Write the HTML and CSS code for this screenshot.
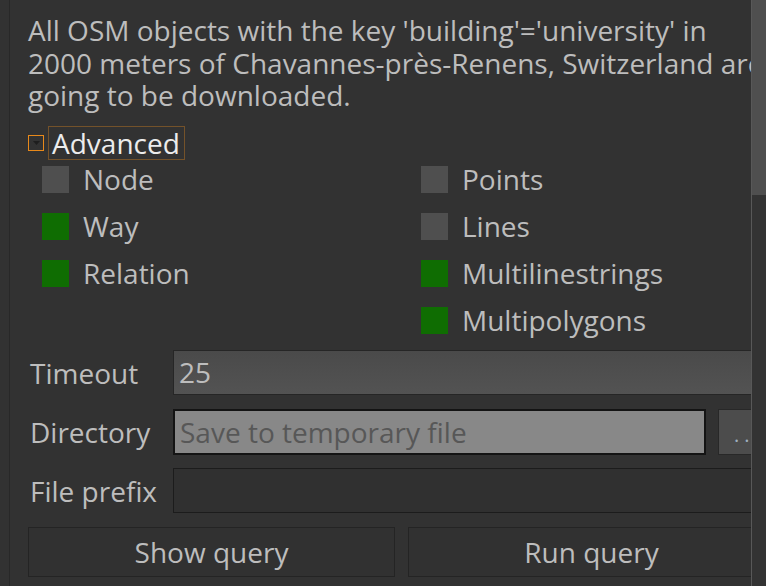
FILE: index.html
```html
<!DOCTYPE html>
<html>
<head>
<meta charset="utf-8">
<link rel="stylesheet" href="styles.css">
</head>
<body>
<div class="viewport">
  <div class="frame">
    <div class="content">
      <p class="intro">All OSM objects with the key 'building'='university' in<br>2000 meters of Chavannes-près-Renens, Switzerland are<br>going to be downloaded.</p>
      <div class="advanced">
        <span class="toggle"><svg width="7" height="5" viewBox="0 0 7 5"><path d="M0 0H7L3.5 4Z" fill="#1e1e1e"/></svg></span>
        <span class="adv-label">Advanced</span>
      </div>
      <div class="checks">
        <div class="col">
          <div class="check"><span class="box off"></span><span class="lbl">Node</span></div>
          <div class="check"><span class="box on"></span><span class="lbl">Way</span></div>
          <div class="check"><span class="box on"></span><span class="lbl">Relation</span></div>
        </div>
        <div class="col col-right">
          <div class="check"><span class="box off"></span><span class="lbl">Points</span></div>
          <div class="check"><span class="box off"></span><span class="lbl">Lines</span></div>
          <div class="check"><span class="box on"></span><span class="lbl">Multilinestrings</span></div>
          <div class="check"><span class="box on"></span><span class="lbl">Multipolygons</span></div>
        </div>
      </div>
      <div class="form">
        <div class="row">
          <span class="flabel">Timeout</span>
          <div class="input timeout">25</div>
        </div>
        <div class="row">
          <span class="flabel">Directory</span>
          <div class="input dir">Save to temporary file</div>
          <div class="browse">..</div>
        </div>
        <div class="row">
          <span class="flabel">File prefix</span>
          <div class="input prefix"></div>
        </div>
        <div class="buttons">
          <div class="btn">Show query</div>
          <div class="btn">Run query</div>
        </div>
      </div>
    </div>
  </div>
  <div class="scrollbar"><div class="handle"></div></div>
</div>
</body>
</html>
```
FILE: styles.css
```css
html, body {
  margin: 0;
  padding: 0;
  background: #323232;
  overflow: hidden;
}
body {
  font-family: "Open Sans", "Noto Sans", sans-serif;
  color: #bdbdbd;
}
.viewport {
  display: flex;
  width: 766px;
  height: 586px;
}
.frame {
  margin-left: 9px;
  border-left: 1px solid #282828;
  width: 741px;
  flex-shrink: 0;
  overflow: hidden;
}
.content {
  width: 747px;
  padding-left: 18px;
  padding-top: 14px;
}
.intro {
  margin: 0;
  font-size: 28px;
  line-height: 32.5px;
  white-space: nowrap;
}
.advanced {
  display: flex;
  align-items: center;
  height: 34px;
  margin-top: 14.5px;
}
.toggle {
  box-sizing: border-box;
  width: 16px;
  height: 16px;
  border: 1px solid #e8891a;
  display: flex;
  align-items: center;
  justify-content: center;
}
.adv-label {
  margin-left: 4px;
  box-sizing: border-box;
  height: 34px;
  border: 1px solid #74522a;
  padding: 0 4px 0 3px;
  color: #ececec;
  font-size: 28px;
  line-height: 32px;
}
.checks {
  display: flex;
  margin-top: 6px;
  padding-left: 14px;
}
.col {
  display: flex;
  flex-direction: column;
  gap: 20px;
  width: 379px;
  flex-shrink: 0;
}
.check {
  display: flex;
  align-items: center;
  height: 27px;
}
.box {
  width: 27px;
  height: 27px;
  margin-right: 14px;
  flex-shrink: 0;
}
.box.off { background: #4f4f4f; }
.box.on { background: #0f6d02; }
.lbl {
  font-size: 28px;
  line-height: 27px;
  white-space: nowrap;
}
.form {
  margin-top: 16px;
  display: flex;
  flex-direction: column;
  gap: 13.5px;
}
.row {
  display: flex;
  align-items: center;
}
.flabel {
  width: 145px;
  flex-shrink: 0;
  font-size: 28px;
  padding-left: 2px;
  box-sizing: border-box;
  white-space: nowrap;
}
.input {
  box-sizing: border-box;
  height: 45px;
  border: 1px solid #262626;
  font-size: 28px;
  line-height: 43px;
  padding-left: 5px;
}
.timeout {
  flex: 1;
  background: linear-gradient(#4a4a4a, #535353);
  color: #bdbdbd;
}
.dir {
  width: 533px;
  height: 46px;
  flex-shrink: 0;
  background: #888888;
  border: 2px solid #141414;
  color: #575757;
  line-height: 42px;
  white-space: nowrap;
}
.browse {
  box-sizing: border-box;
  margin-left: 12px;
  flex: 1;
  height: 46px;
  background: #4c4c4c;
  border: 1px solid #282828;
  color: #9fb0c0;
  font-size: 20px;
  letter-spacing: 5px;
  padding-left: 15px;
  line-height: 50px;
  white-space: nowrap;
}
.prefix {
  flex: 1;
  background: #303030;
  border: 1px solid #1c1c1c;
}
.buttons {
  display: flex;
  gap: 13px;
}
.btn {
  box-sizing: border-box;
  flex: 1;
  height: 50px;
  border: 1px solid #242424;
  background: #313131;
  text-align: center;
  font-size: 28px;
  line-height: 48px;
}
.scrollbar {
  box-sizing: border-box;
  width: 15px;
  height: 586px;
  border-left: 1px solid #585858;
  background: #333333;
}
.handle {
  height: 195px;
  background: #4f4f4f;
}
```
